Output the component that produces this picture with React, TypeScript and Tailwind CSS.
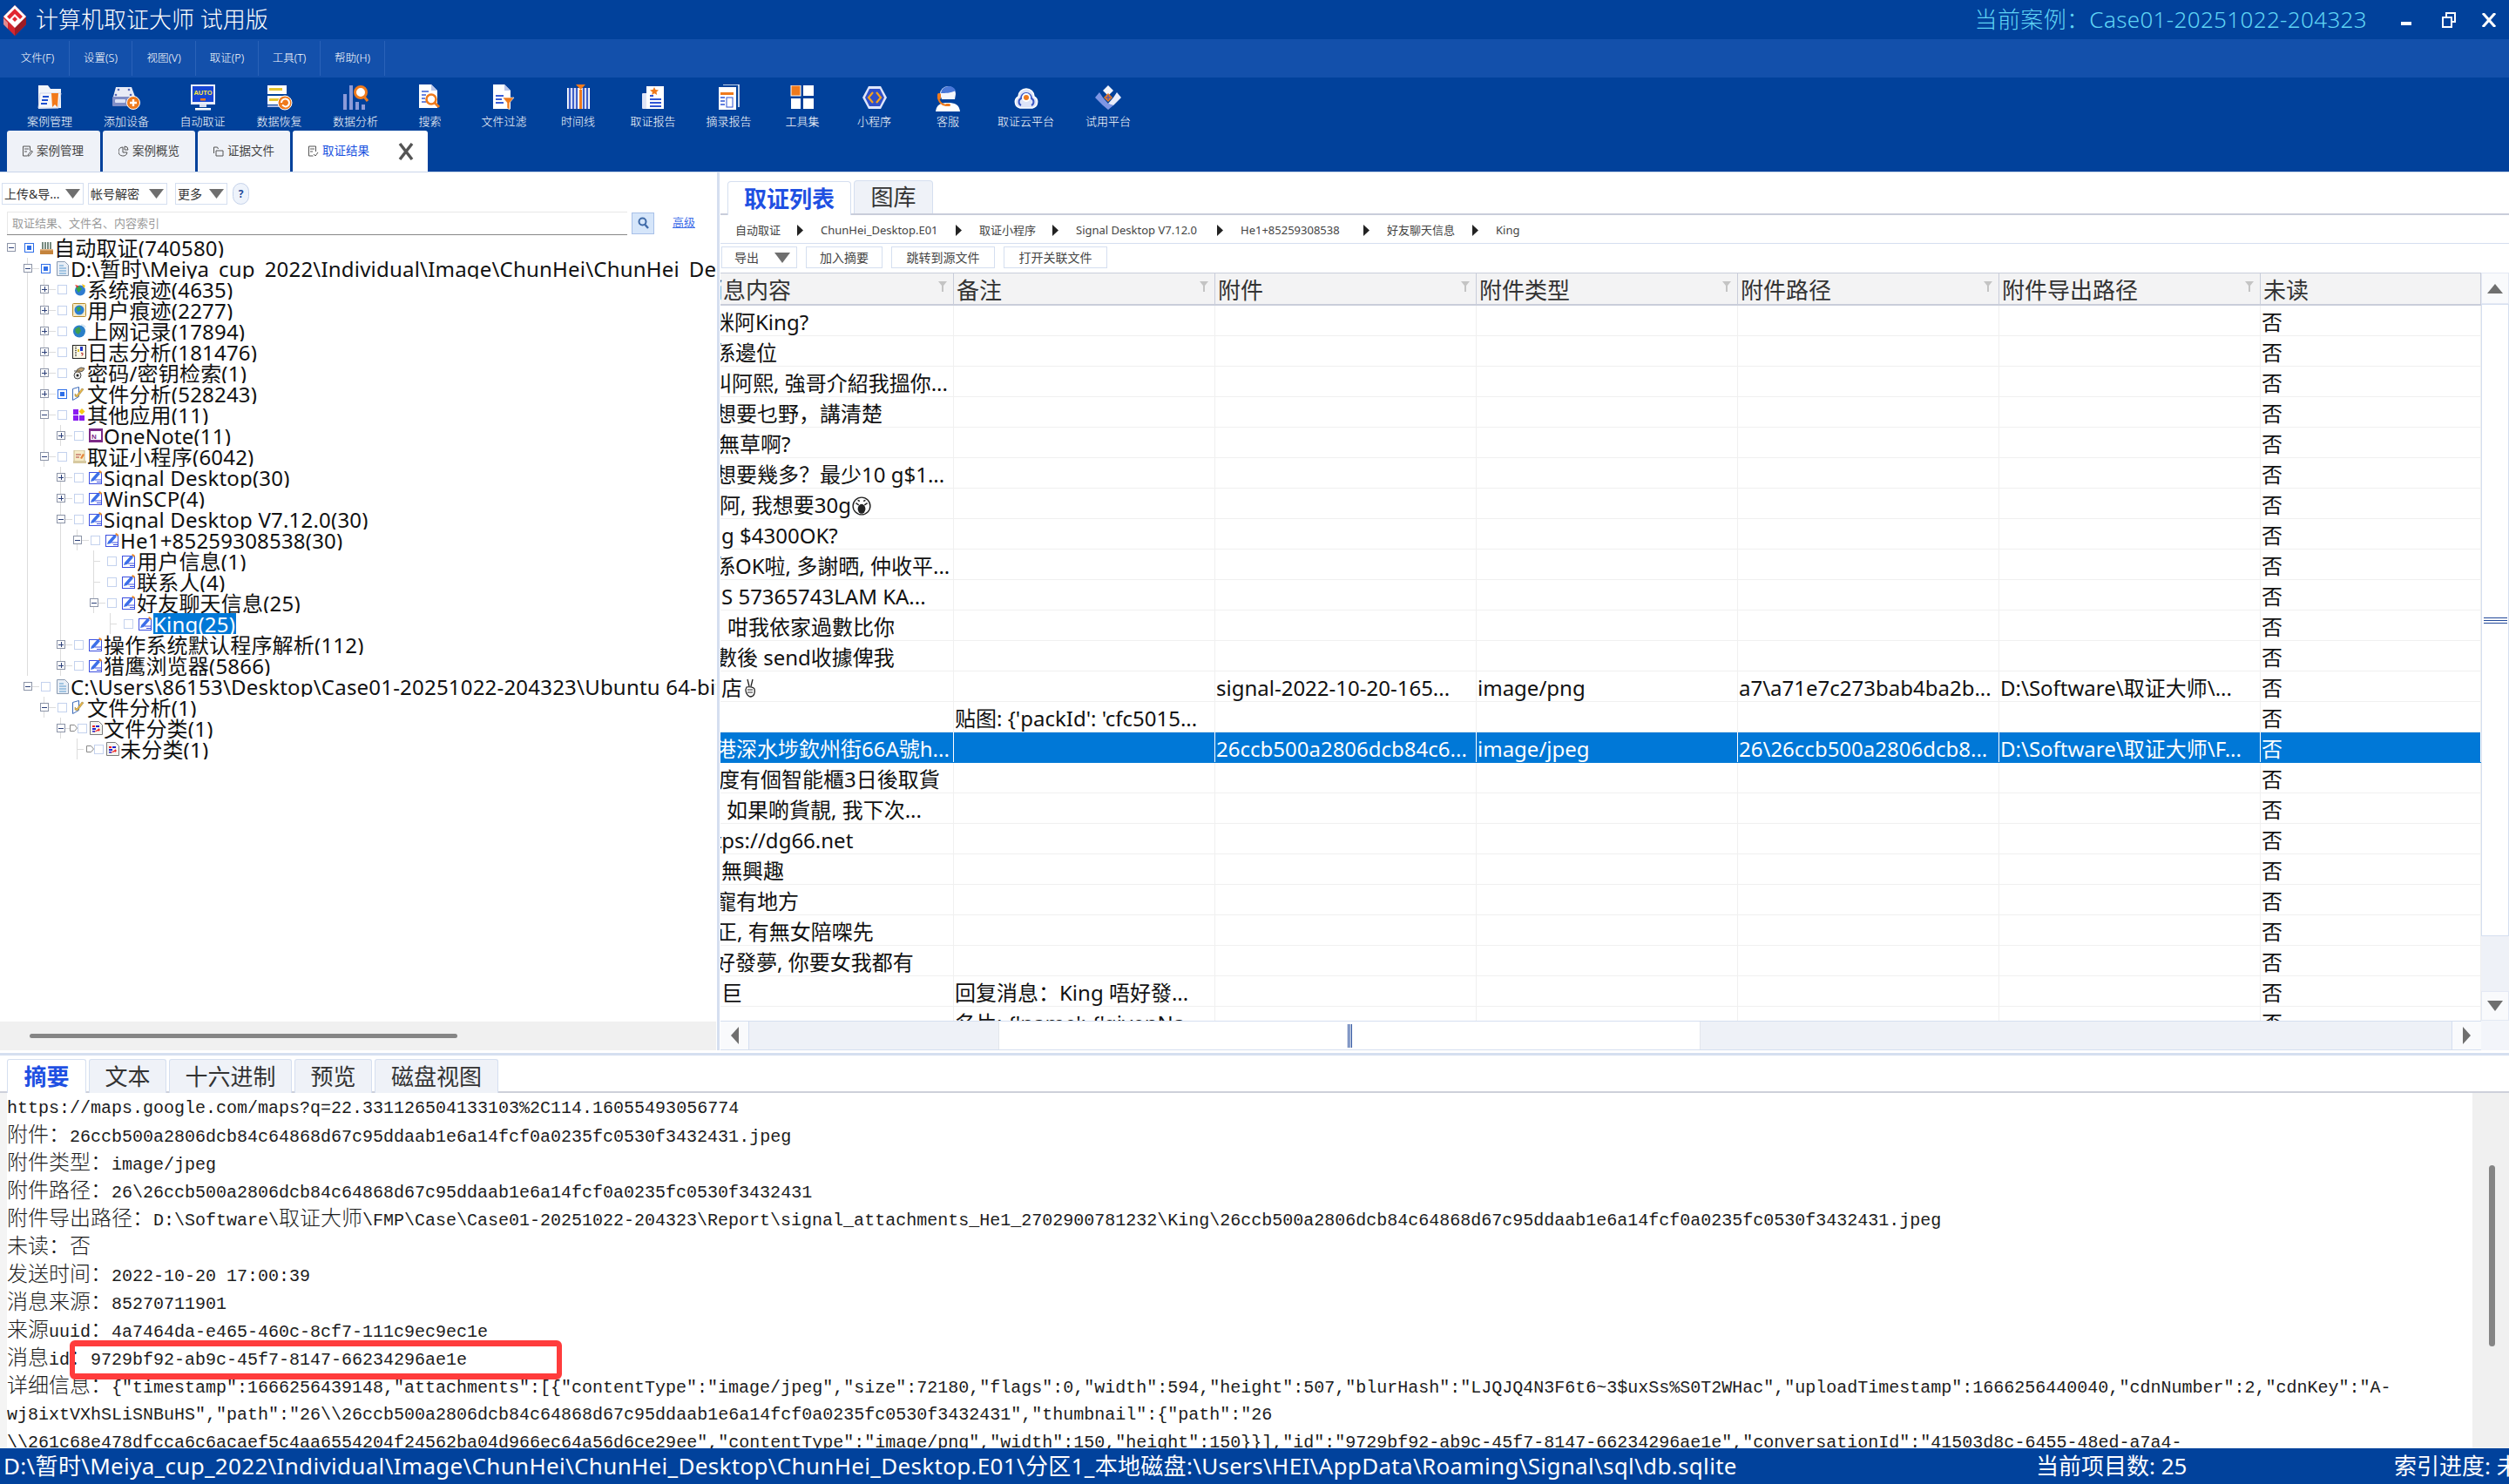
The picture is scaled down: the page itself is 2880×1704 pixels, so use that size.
import React from "react";

const SANS = "font-['Noto_Sans','Noto_Sans_CJK_SC',sans-serif]";

/* ---------- toolbar icons ---------- */
const Logo = () => (
  <svg width="28" height="36" viewBox="0 0 28 36">
    <path d="M14 1L27 14v9L14 36 1 23v-9z" fill="#d5262e" />
    <path d="M14 36V26L27 14v9z" fill="#9c1c25" />
    <path d="M14 1l13 13-13 13L1 14z" fill="#fff" />
    <path d="M14 5l9 9-3 3-6-6-6 6-3-3z" fill="#e1262f" />
    <path d="M14 14l3 3-3 3-3-3z" fill="#e1262f" />
    <path d="M1 16l5 5v7l-5-5z" fill="#f0f0f0" opacity=".5" />
  </svg>
);

const IconCase = () => (
  <svg width="30" height="28" viewBox="0 0 30 28">
    <path d="M2 0h11l3 4h12v22l-26 1z" fill="#fff" opacity=".95" />
    <path d="M4 9h24l-3 17H2z" fill="#f6f7fb" stroke="#cfd6ea" />
    <path d="M7 13h7M6 17h7M5 21h7" stroke="#1e4fd0" strokeWidth="1.8" />
    <path d="M17 9h8l-1 16-3-3-3 3z" fill="#f27a1a" />
  </svg>
);
const IconAdd = () => (
  <svg width="34" height="28" viewBox="0 0 34 28">
    <path d="M5 2h18l4 11H2z" fill="#e8ebf6" />
    <circle cx="8" cy="5" r="1.3" fill="#5466b8" /><circle cx="20" cy="5" r="1.3" fill="#5466b8" />
    <circle cx="5" cy="11" r="1.3" fill="#5466b8" /><circle cx="22" cy="11" r="1.3" fill="#5466b8" />
    <rect x="1" y="13" width="27" height="11" rx="1" fill="#7f8dc6" />
    <rect x="4" y="16" width="12" height="4" rx="1" fill="#dbe1f5" />
    <circle cx="25" cy="20" r="7.5" fill="#ef7a1c" stroke="#fff" />
    <path d="M25 16v8M21 20h8" stroke="#fff" strokeWidth="2.4" />
  </svg>
);
const IconAuto = () => (
  <svg width="28" height="30" viewBox="0 0 28 30">
    <rect x="0" y="0" width="28" height="23" fill="#e9edf8" />
    <rect x="2" y="2" width="24" height="18" fill="#1645d4" />
    <text x="14" y="12" textAnchor="middle" fontSize="7.5" fontWeight="700" fill="#ffe83a" fontFamily="Liberation Sans">AUTO</text>
    <rect x="11" y="16" width="6" height="2.5" fill="#f47a1c" />
    <rect x="10" y="23" width="8" height="3" fill="#d7dcef" />
    <rect x="5" y="27" width="18" height="2.5" fill="#fff" />
  </svg>
);
const IconRecover = () => (
  <svg width="30" height="30" viewBox="0 0 30 30">
    <rect x="1" y="1" width="22" height="10" fill="#fff" /><rect x="3" y="4" width="15" height="3" fill="#e6c52e" />
    <rect x="1" y="13" width="22" height="10" fill="#fff" /><rect x="3" y="16" width="11" height="3" fill="#e6c52e" />
    <rect x="1" y="24" width="15" height="2" fill="#aeb9e2" />
    <circle cx="21" cy="21" r="8" fill="#ef7a1c" stroke="#fff" />
    <path d="M17 21a4.500 4.500 0 1 1 4 4.500M21 25.500l-3-2" fill="none" stroke="#fff" strokeWidth="2" />
  </svg>
);
const IconAnalysis = () => (
  <svg width="30" height="30" viewBox="0 0 30 30">
    <rect x="1" y="11" width="4" height="18" fill="#8b9ad8" />
    <rect x="8" y="1" width="4" height="28" fill="#8b9ad8" />
    <rect x="15" y="20" width="4" height="9" fill="#8b9ad8" />
    <rect x="22" y="23" width="4" height="6" fill="#8b9ad8" />
    <circle cx="21" cy="9" r="6.5" fill="#fff" stroke="#ef7a1c" strokeWidth="3" />
    <path d="M25 14l4 5" stroke="#ef7a1c" strokeWidth="3" />
  </svg>
);
const IconSearchDoc = () => (
  <svg width="28" height="30" viewBox="0 0 28 30">
    <path d="M1 0h14l7 7v20H1z" fill="#fff" /><path d="M15 0l7 7h-7z" fill="#b9c5ea" />
    <path d="M4 8h8M4 12h5M4 16h4M4 20h5" stroke="#3a5ed6" strokeWidth="1.6" />
    <circle cx="15" cy="17" r="5.5" fill="#fff" stroke="#ef7a1c" strokeWidth="2.6" />
    <path d="M19 21l5 5" stroke="#ef7a1c" strokeWidth="3" />
  </svg>
);
const IconFilterDoc = () => (
  <svg width="28" height="30" viewBox="0 0 28 30">
    <path d="M1 0h13l7 7v21H1z" fill="#fff" /><path d="M14 0l7 7h-7z" fill="#b9c5ea" />
    <path d="M4 13h9M4 17h7M4 21h9" stroke="#3a5ed6" strokeWidth="1.8" />
    <path d="M12 15h13l-5 6v8l-3-2v-6z" fill="#ef7a1c" stroke="#fff" strokeWidth=".6" />
  </svg>
);
const IconTime = () => (
  <svg width="28" height="30" viewBox="0 0 28 30">
    <rect x="1" y="4" width="26" height="24" fill="#fff" />
    <path d="M4 4v24M8 4v24M12 4v24M20 4v24M24 4v24" stroke="#3e5fc9" strokeWidth="2.4" />
    <rect x="15" y="6" width="3" height="22" fill="#ef7a1c" />
    <path d="M11 0h11l-5.500 6z" fill="#ef7a1c" />
  </svg>
);
const IconReport = () => (
  <svg width="26" height="30" viewBox="0 0 26 30">
    <rect x="0" y="10" width="6" height="18" rx="1" fill="#dfe4f6" />
    <rect x="5" y="2" width="20" height="26" fill="#fff" />
    <path d="M14 3l1.500 3 3.500.4-2.500 2.300.7 3.300-3-1.700-3 1.700.7-3.300L9 6.400 12.500 6z" fill="#ef7a1c" />
    <path d="M9 13h4M9 17h13M9 21h13M9 25h13" stroke="#2f55d4" strokeWidth="2" />
  </svg>
);
const IconExtract = () => (
  <svg width="26" height="30" viewBox="0 0 26 30">
    <path d="M6 0h18v26" fill="none" stroke="#fff" strokeWidth="1.5" />
    <rect x="1" y="3" width="20" height="26" fill="#fff" />
    <rect x="3" y="9" width="15" height="3" fill="#ef7a1c" />
    <path d="M3 15h5M3 19h5M3 23h5" stroke="#2f55d4" strokeWidth="1.6" />
    <rect x="10" y="15" width="7" height="11" fill="none" stroke="#2f55d4" />
  </svg>
);
const IconTools = () => (
  <svg width="28" height="28" viewBox="0 0 28 28">
    <rect x="1" y="0" width="11" height="12" fill="#ef7a1c" stroke="#fff" />
    <rect x="15" y="0" width="12" height="12" fill="#fff" />
    <rect x="1" y="15" width="11" height="12" fill="#fff" />
    <rect x="15" y="15" width="12" height="12" fill="#fff" />
  </svg>
);
const IconMini = () => (
  <svg width="30" height="30" viewBox="0 0 30 30">
    <path d="M8 2h14l7 13-7 13H8L1 15z" fill="#dfe6fa" />
    <path d="M9 5h12l5 10-5 10H9L4 15z" fill="#2f4fc9" />
    <path d="M13 9l-5 6 5 6M17 9l5 6-5 6" fill="none" stroke="#f6a21c" strokeWidth="2.2" />
  </svg>
);
const IconService = () => (
  <svg width="28" height="32" viewBox="0 0 28 32">
    <path d="M0 32c1-8 6-10 14-10s13 2 14 10z" fill="#fff" />
    <path d="M5 12a9 9 0 0 1 18 0l-1 6H7z" fill="#f6f7fc" />
    <path d="M6 11a9 9 0 0 1 17-3c-6 3-12 3-17 3z" fill="#4a78d8" />
    <path d="M3 14c0 7 3 10 9 11" fill="none" stroke="#ef7a1c" strokeWidth="2" />
    <rect x="2" y="11" width="4" height="7" rx="1.500" fill="#ef7a1c" />
    <rect x="11" y="23" width="6" height="3" rx="1.500" fill="#ef7a1c" />
  </svg>
);
const IconCloud = () => (
  <svg width="32" height="30" viewBox="0 0 32 30">
    <path d="M9 27a7 7 0 0 1-2-13 9 9 0 0 1 18 0 7 7 0 0 1-2 13z" fill="#dde4f8" stroke="#fff" strokeWidth="1.5" />
    <path d="M10 24a4.500 4.500 0 0 1 0-8 6 6 0 0 1 12 0 4.500 4.500 0 0 1 0 8" fill="none" stroke="#3a57c4" strokeWidth="2" />
    <circle cx="16" cy="15" r="5" fill="#fff" /><circle cx="16" cy="15" r="3" fill="#ef7a1c" />
  </svg>
);
const IconTrial = () => (
  <svg width="30" height="30" viewBox="0 0 30 30">
    <path d="M15 1l6 6-6 6-6-6z" fill="#f2f4fb" />
    <path d="M5 9L0 15l9 9 6 5 6-5-6-2-6-7z" fill="#7f96e4" />
    <path d="M25 9l5 6-9 9-6-2 6-7z" fill="#e8ecfa" />
    <path d="M15 10l5 5-5 5-5-5z" fill="#ef7a1c" />
    <path d="M15 12v6M12 15h6" stroke="#2f4fc9" strokeWidth="1" />
  </svg>
);

const tools: { label: string; w: string; icon: React.ReactNode }[] = [
  { label: "案例管理", w: "w-[88px]", icon: <IconCase /> },
  { label: "添加设备", w: "w-[88px]", icon: <IconAdd /> },
  { label: "自动取证", w: "w-[87px]", icon: <IconAuto /> },
  { label: "数据恢复", w: "w-[89px]", icon: <IconRecover /> },
  { label: "数据分析", w: "w-[86px]", icon: <IconAnalysis /> },
  { label: "搜索", w: "w-[85px]", icon: <IconSearchDoc /> },
  { label: "文件过滤", w: "w-[85px]", icon: <IconFilterDoc /> },
  { label: "时间线", w: "w-[85px]", icon: <IconTime /> },
  { label: "取证报告", w: "w-[87px]", icon: <IconReport /> },
  { label: "摘录报告", w: "w-[87px]", icon: <IconExtract /> },
  { label: "工具集", w: "w-[82px]", icon: <IconTools /> },
  { label: "小程序", w: "w-[83px]", icon: <IconMini /> },
  { label: "客服", w: "w-[86px]", icon: <IconService /> },
  { label: "取证云平台", w: "w-[93px]", icon: <IconCloud /> },
  { label: "试用平台", w: "w-[96px]", icon: <IconTrial /> },
];

const menus = [
  { t: "文件(F)", w: "w-[80px] pl-[7px]" },
  { t: "设置(S)", w: "w-[72px]" },
  { t: "视图(V)", w: "w-[73px]" },
  { t: "取证(P)", w: "w-[72px]" },
  { t: "工具(T)", w: "w-[71px]" },
  { t: "帮助(H)", w: "w-[74px]" },
];

/* ---------- tree icons ---------- */
const TPencil = () => (
  <svg width="16" height="16" viewBox="0 0 16 16">
    <rect x=".5" y="2.500" width="14" height="13" fill="#fff" stroke="#3c4fe0" />
    <path d="M7 11h7M9 13.500h5" stroke="#3c4fe0" />
    <path d="M2 13l1-3 7-8 3 2-7 8z" fill="#3c6fe8" />
    <path d="M11 1l1.500-1L15 2l-1 2z" fill="#f0902a" />
  </svg>
);
const TDoc = () => (
  <svg width="14" height="17" viewBox="0 0 14 17">
    <path d="M.5.5h9l4 4v12H.5z" fill="#e8eef6" stroke="#8a9ab0" />
    <path d="M3 5h5M3 8h8M3 11h8M3 14h8" stroke="#5a9acd" />
  </svg>
);
const TDb = () => (
  <svg width="15" height="15" viewBox="0 0 15 15">
    <path d="M3 1v9M6 1v9M9 1v9M12 1v9" stroke="#3d5a4a" strokeWidth="1.400" />
    <rect x="0" y="9" width="15" height="6" fill="#c4833c" />
    <rect x="0" y="9" width="15" height="1.500" fill="#e6b98a" />
  </svg>
);
const TSys = () => (
  <svg width="15" height="15" viewBox="0 0 15 15">
    <circle cx="8" cy="8.500" r="6" fill="#2f7bd0" />
    <path d="M3 6l4-3 3 4-4 4z" fill="#35a54a" /><path d="M2 2l4 1-1 3z" fill="#e23b2e" />
    <path d="M10 1l4 2-2 3z" fill="#f2c21a" />
  </svg>
);
const TGlobeBox = () => (
  <svg width="16" height="16" viewBox="0 0 16 16">
    <rect x=".5" y=".5" width="15" height="15" rx="1" fill="#f4e9c6" stroke="#b58a2c" />
    <circle cx="8" cy="8" r="5.500" fill="#2b7fd2" /><path d="M5 5l4-1 1 4-4 2z" fill="#3aa548" />
  </svg>
);
const TGlobe = () => (
  <svg width="16" height="16" viewBox="0 0 16 16">
    <circle cx="8" cy="8.500" r="7" fill="#2b7fc8" /><path d="M3 6l5-3 2 5-3 4-3-2z" fill="#3f9e4e" />
    <path d="M10 1c3 0 5 2 5 3" stroke="#cfe2ef" fill="none" strokeWidth="1.500" />
  </svg>
);
const TLog = () => (
  <svg width="16" height="16" viewBox="0 0 16 16">
    <rect x=".5" y=".5" width="15" height="15" fill="#fbf8e8" stroke="#222" />
    <path d="M4 2v12" stroke="#222" strokeDasharray="1 1" strokeWidth="1.500" />
    <rect x="9" y="2" width="3" height="5" fill="#2438c8" />
    <rect x="6" y="5" width="2" height="3" fill="#e0c22a" />
    <path d="M10 9.500h2v2h-1v1" fill="none" stroke="#b8262a" />
  </svg>
);
const TKey = () => (
  <svg width="16" height="16" viewBox="0 0 16 16">
    <circle cx="6" cy="11" r="4" fill="#eee" stroke="#444" />
    <path d="M2 6h7M4 8l2-4 4-2 4 1-2 3-3 1" fill="#c9a873" stroke="#555" />
    <circle cx="6" cy="11" r="1.500" fill="#222" />
  </svg>
);
const TFile = () => (
  <svg width="16" height="16" viewBox="0 0 16 16">
    <path d="M.5 2.500l7-2v11l-7 4z" fill="#fff" stroke="#3c6bb8" />
    <path d="M3 8l2 2 6-8 2 1-7 9-3-1z" fill="#e8b64a" stroke="#8a7a3c" strokeWidth=".5" />
  </svg>
);
const TApps = () => (
  <svg width="14" height="14" viewBox="0 0 14 14">
    <rect x="0" y="1" width="6" height="6" fill="#8a1cf0" /><rect x="0" y="8" width="6" height="6" fill="#8a1cf0" />
    <rect x="7" y="8" width="6" height="6" fill="#8a1cf0" /><path d="M10 0l3.500 3.500L10 7 6.500 3.500z" fill="#f6c81a" />
  </svg>
);
const TNote = () => (
  <svg width="16" height="16" viewBox="0 0 16 16">
    <rect width="16" height="16" fill="#7c2a88" />
    <rect x="8" y="3" width="6" height="10" fill="#fff" />
    <rect x="2" y="3" width="8" height="10" fill="#fff" />
    <text x="6" y="11.500" textAnchor="middle" fontSize="8" fontWeight="700" fill="#7c2a88" fontFamily="Liberation Sans">N</text>
  </svg>
);
const TMini = () => (
  <svg width="15" height="15" viewBox="0 0 15 15">
    <rect x="1" y="0" width="12" height="13" fill="#f6ecc8" stroke="#c9b88a" />
    <path d="M3 5h6M3 8h4" stroke="#b14040" /><path d="M8 9l3-5 2 1-3 5z" fill="#e8853a" />
    <rect x="0" y="12" width="15" height="3" fill="#d7c9a0" />
  </svg>
);
const TClass = () => (
  <svg width="15" height="16" viewBox="0 0 15 16">
    <path d="M.5.5h10l4 4v11H.5z" fill="#f4f4f0" stroke="#7b7b7b" />
    <rect x="3" y="5" width="3" height="2" fill="#e22" /><rect x="7" y="5" width="4" height="2" fill="#22c" />
    <rect x="3" y="8" width="4" height="2" fill="#22c" /><path d="M4 13l6-4v-1l2 2-2 2v-1z" fill="#e22" />
    <rect x="3" y="11" width="3" height="1.500" fill="#22c" />
  </svg>
);

type R = {
  l: number;
  t: string;
  exp?: "+" | "-";
  chk?: boolean;
  icon: React.ReactNode;
  sel?: boolean;
  flag?: boolean;
  guides: { x: number; end?: boolean }[];
};
const g = (...xs: number[]) => xs.map((x) => ({ x }));
const pen = <TPencil />;
const rows: R[] = [
  { l: 0, t: "自动取证(740580)", exp: "-", chk: true, icon: <TDb />, guides: [] },
  { l: 1, t: "D:\\暂时\\Meiya_cup_2022\\Individual\\Image\\ChunHei\\ChunHei_Desktop\\ChunHei_Desktop.E01", exp: "-", chk: true, icon: <TDoc />, guides: g(31) },
  { l: 2, t: "系统痕迹(4635)", exp: "+", icon: <TSys />, guides: g(31, 50) },
  { l: 2, t: "用户痕迹(2277)", exp: "+", icon: <TGlobeBox />, guides: g(31, 50) },
  { l: 2, t: "上网记录(17894)", exp: "+", icon: <TGlobe />, guides: g(31, 50) },
  { l: 2, t: "日志分析(181476)", exp: "+", icon: <TLog />, guides: g(31, 50) },
  { l: 2, t: "密码/密钥检索(1)", exp: "+", icon: <TKey />, guides: g(31, 50) },
  { l: 2, t: "文件分析(528243)", exp: "+", chk: true, icon: <TFile />, guides: g(31, 50) },
  { l: 2, t: "其他应用(11)", exp: "-", icon: <TApps />, guides: g(31, 50) },
  { l: 3, t: "OneNote(11)", exp: "+", icon: <TNote />, guides: g(31, 50, 69) },
  { l: 2, t: "取证小程序(6042)", exp: "-", icon: <TMini />, guides: g(31, 50) },
  { l: 3, t: "Signal Desktop(30)", exp: "+", icon: pen, guides: g(31, 69) },
  { l: 3, t: "WinSCP(4)", exp: "+", icon: pen, guides: g(31, 69) },
  { l: 3, t: "Signal Desktop V7.12.0(30)", exp: "-", icon: pen, guides: g(31, 69) },
  { l: 4, t: "He1+85259308538(30)", exp: "-", icon: pen, guides: g(31, 69, 88) },
  { l: 5, t: "用户信息(1)", icon: pen, guides: g(31, 69, 107) },
  { l: 5, t: "联系人(4)", icon: pen, guides: g(31, 69, 107) },
  { l: 5, t: "好友聊天信息(25)", exp: "-", icon: pen, guides: g(31, 69, 107) },
  { l: 6, t: "King(25)", icon: pen, sel: true, guides: g(31, 69, 126) },
  { l: 3, t: "操作系统默认程序解析(112)", exp: "+", icon: pen, guides: g(31, 69) },
  { l: 3, t: "猎鹰浏览器(5866)", exp: "+", icon: pen, guides: g(31, 69) },
  { l: 1, t: "C:\\Users\\86153\\Desktop\\Case01-20251022-204323\\Ubuntu 64-bit-disk1.vmdk", exp: "-", icon: <TDoc />, guides: [] },
  { l: 2, t: "文件分析(1)", exp: "-", icon: <TFile />, guides: g(50) },
  { l: 3, t: "文件分类(1)", exp: "-", icon: <TClass />, flag: true, guides: g(69) },
  { l: 4, t: "未分类(1)", icon: <TClass />, flag: true, guides: g(88) },
];

const Expander = ({ k }: { k?: "+" | "-" }) =>
  k ? (
    <span className="relative z-10 flex h-[10px] w-[10px] shrink-0 items-center justify-center border border-[#8d95a8] bg-white">
      <span className="absolute h-[1px] w-[6px] bg-[#2b3f78]" />
      {k === "+" && <span className="absolute h-[6px] w-[1px] bg-[#2b3f78]" />}
    </span>
  ) : (
    <span className="h-[10px] w-[10px] shrink-0" />
  );

const Check = ({ on }: { on?: boolean }) => (
  <span className={`relative z-10 flex h-[11px] w-[11px] shrink-0 items-center justify-center border bg-white ${on ? "border-[#2f6fe8]" : "border-[#c4d2ee]"}`}>
    {on && <span className="h-[5px] w-[5px] bg-[#2f6fe8]" />}
  </span>
);

const TreeRow = ({ r }: { r: R }) => (
  <div className="relative flex h-[24px] items-center overflow-hidden" style={{ paddingLeft: 8 + 19 * r.l }}>
    {r.guides.map((gd) => (
      <span key={gd.x} className="absolute top-0 h-[24px] w-[1px] bg-[#dcdcdc]" style={{ left: gd.x }} />
    ))}
    {r.l > 0 && <span className="absolute top-[12px] h-[1px] w-[8px] bg-[#dcdcdc]" style={{ left: 12 + 19 * r.l + (r.exp ? 6 : 0) }} />}
    <Expander k={r.exp} />
    {r.flag ? (
      <span className="relative z-10 ml-[5px] flex w-[9px] items-center">
        <svg width="9" height="8" viewBox="0 0 9 8"><path d="M.5.5h5l3 3.500-3 3.500h-5z" fill="#fff" stroke="#888" /></svg>
      </span>
    ) : (
      <span className="w-[10px] shrink-0" />
    )}
    <Check on={r.chk} />
    <span className={`flex shrink-0 items-center justify-center ${r.flag ? "ml-[3px] w-[15px]" : "ml-[6px] w-[16px]"}`}>{r.icon}</span>
    <span className={`ml-[1px] h-[24px] whitespace-nowrap pt-[1px] text-[24px] leading-[24px] tracking-[0.2px] ${r.sel ? "bg-[#0078d7] pr-[1px] text-white" : "text-[#111]"}`}>{r.t}</span>
  </div>
);

/* ---------- table ---------- */
const Scream = () => (
  <svg className="ml-[1px] inline-block align-[-3px]" width="22" height="22" viewBox="0 0 20 20">
    <circle cx="10" cy="10" r="9" fill="#fff" stroke="#222" strokeWidth="1.300" />
    <ellipse cx="10" cy="13" rx="4" ry="5" fill="#222" />
    <path d="M4 7l3 2M16 7l-3 2M6 4l2 1M14 4l-2 1" stroke="#222" strokeWidth="1.400" />
  </svg>
);
const Hand = () => (
  <svg className="ml-[2px] inline-block align-[-2px]" width="14" height="22" viewBox="0 0 14 22">
    <path d="M4 1l2 8M10 1L8 9M3 10c-2 3-1 9 4 11 5 0 6-5 5-9-1-2-6-3-9-2z" fill="#fff" stroke="#222" strokeWidth="1.300" />
    <path d="M4 13h6M4 16h6" stroke="#222" />
  </svg>
);

type Cell = { msg?: React.ReactNode; off?: string; note?: string; att?: string; type?: string; path?: string; exp?: string };
const data: Cell[] = [
  { msg: "咪阿King?", off: "-ml-[9px]" },
  { msg: "係邊位", off: "-ml-[8px]" },
  { msg: "叫阿熙, 強哥介紹我搵你...", off: "-ml-[12px]" },
  { msg: "想要乜野，講清楚", off: "-ml-[7px]" },
  { msg: "無草啊?", off: "-ml-[3px]" },
  { msg: "想要幾多？最少10 g$1...", off: "-ml-[7px]" },
  { msg: <>阿, 我想要30g<Scream /></>, off: "-ml-[2px]" },
  { msg: "g $4300OK?", off: "ml-0" },
  { msg: "係OK啦, 多謝晒, 仲收平...", off: "-ml-[8px]" },
  { msg: "S 57365743LAM KA...", off: "ml-0" },
  { msg: "咁我依家過數比你", off: "ml-[7px]" },
  { msg: "數後 send收據俾我", off: "-ml-[6px]" },
  { msg: <>店<Hand /></>, off: "ml-0", att: "signal-2022-10-20-165...", type: "image/png", path: "a7\\a71e7c273bab4ba2b...", exp: "D:\\Software\\取证大师\\..." },
  { note: "贴图: {'packId': 'cfc5015..." },
  { msg: "港深水埗欽州街66A號h...", off: "-ml-[7px]", att: "26ccb500a2806dcb84c6...", type: "image/jpeg", path: "26\\26ccb500a2806dcb8...", exp: "D:\\Software\\取证大师\\F..." },
  { msg: "度有個智能櫃3日後取貨", off: "-ml-[3px]" },
  { msg: "如果啲貨靚, 我下次...", off: "ml-[6px]" },
  { msg: "ttps://dg66.net", off: "-ml-[17px]" },
  { msg: "無興趣", off: "ml-0" },
  { msg: "寵有地方", off: "-ml-[7px]" },
  { msg: "正, 有無女陪㗎先", off: "-ml-[6px]" },
  { msg: "好發夢, 你要女我都有", off: "-ml-[8px]" },
  { msg: "巨", off: "ml-0", note: "回复消息：King 唔好發..." },
  { note: "名片: {'name': {'givenNa..." },
];

const colW = ["w-[268px]", "w-[300px]", "w-[300px]", "w-[300px]", "w-[300px]", "w-[300px]", "flex-1"];

const HeadCell = ({ t, w, filter = true, off = "" }: { t: string; w: string; filter?: boolean; off?: string }) => (
  <div className={`relative h-full overflow-hidden border-r border-[#c9cdda] pl-[3px] pt-[2px] text-[26px] leading-[34px] text-[#333] ${w}`}>
    <span className={`block whitespace-nowrap ${off}`}>{t}</span>
    {filter && (
      <svg className="absolute right-[7px] top-[9px]" width="10" height="12" viewBox="0 0 10 12">
        <path d="M0 0h10L6 5v7H4V5z" fill="#c4c4c4" />
      </svg>
    )}
  </div>
);

const BodyCell = ({ w, sel, children, cls = "" }: { w: string; sel?: boolean; children?: React.ReactNode; cls?: string }) => (
  <div className={`h-full overflow-hidden border-r pl-[1px] ${sel ? "border-white" : "border-[#f0f0f0]"} ${w}`}>
    <div className={`whitespace-nowrap text-[24px] leading-[37px] ${cls}`}>{children}</div>
  </div>
);

const Tri = ({ dir, c = "#6f6f6f", w = 14, h = 9 }: { dir: "u" | "d" | "l" | "r"; c?: string; w?: number; h?: number }) => {
  const p = { u: "M0 10L7 0l7 10z", d: "M0 0h14L7 10z", l: "M14 0v10L0 5z", r: "M0 0v10l14-5z" }[dir];
  return (
    <svg width={w} height={h} viewBox="0 0 14 10" preserveAspectRatio="none">
      <path d={p} fill={c} />
    </svg>
  );
};

/* ---------- summary text: half-width mono + full-width CJK ---------- */
const Mixed = ({ s }: { s: string }) => {
  const parts = s.split(/([\u3000-\u9fff\uff00-\uffef]+)/);
  return (
    <>
      {parts.map((p, i) =>
        i % 2 ? (
          <span key={i} className="font-['Noto_Sans_CJK_SC',sans-serif] text-[24px] font-light leading-[1]">{p}</span>
        ) : (
          <span key={i}>{p}</span>
        )
      )}
    </>
  );
};

const lines = [
  "https://maps.google.com/maps?q=22.331126504133103%2C114.16055493056774",
  "附件：26ccb500a2806dcb84c64868d67c95ddaab1e6a14fcf0a0235fc0530f3432431.jpeg",
  "附件类型：image/jpeg",
  "附件路径：26\\26ccb500a2806dcb84c64868d67c95ddaab1e6a14fcf0a0235fc0530f3432431",
  "附件导出路径：D:\\Software\\取证大师\\FMP\\Case\\Case01-20251022-204323\\Report\\signal_attachments_He1_2702900781232\\King\\26ccb500a2806dcb84c64868d67c95ddaab1e6a14fcf0a0235fc0530f3432431.jpeg",
  "未读：否",
  "发送时间：2022-10-20 17:00:39",
  "消息来源：85270711901",
  "来源uuid：4a7464da-e465-460c-8cf7-111c9ec9ec1e",
  "消息id：9729bf92-ab9c-45f7-8147-66234296ae1e",
  "详细信息：{\"timestamp\":1666256439148,\"attachments\":[{\"contentType\":\"image/jpeg\",\"size\":72180,\"flags\":0,\"width\":594,\"height\":507,\"blurHash\":\"LJQJQ4N3F6t6~3$uxSs%S0T2WHac\",\"uploadTimestamp\":1666256440040,\"cdnNumber\":2,\"cdnKey\":\"A-",
  "wj8ixtVXhSLiSNBuHS\",\"path\":\"26\\\\26ccb500a2806dcb84c64868d67c95ddaab1e6a14fcf0a0235fc0530f3432431\",\"thumbnail\":{\"path\":\"26",
  "\\\\261c68e478dfcca6c6acaef5c4aa6554204f24562ba04d966ec64a56d6ce29ee\",\"contentType\":\"image/png\",\"width\":150,\"height\":150}}],\"id\":\"9729bf92-ab9c-45f7-8147-66234296ae1e\",\"conversationId\":\"41503d8c-6455-48ed-a7a4-",
];

const crumbs = [
  { t: "自动取证", w: "w-[98px]" },
  { t: "ChunHei_Desktop.E01", w: "w-[182px]" },
  { t: "取证小程序", w: "w-[111px]" },
  { t: "Signal Desktop V7.12.0", w: "w-[189px]" },
  { t: "He1+85259308538", w: "w-[168px]" },
  { t: "好友聊天信息", w: "w-[125px]" },
  { t: "King", w: "w-[40px]" },
];

const TopTab = ({ label, icon, active, w }: { label: string; icon: React.ReactNode; active?: boolean; w: string }) => (
  <div className={`flex h-[47px] items-center rounded-t-[3px] pl-[18px] text-[13.5px] ${w} ${active ? "bg-white text-[#1a52e0]" : "bg-[#eff2f8] text-[#444]"}`}>
    <span className="mr-[2px] flex h-[14px] w-[14px] items-center">{icon}</span>
    {label}
    {active && (
      <svg className="ml-[33px]" width="18" height="20" viewBox="0 0 18 20">
        <path d="M2 1l14 18M16 1L2 19" stroke="#555" strokeWidth="3.400" />
      </svg>
    )}
  </div>
);

export default function App() {
  return (
    <div className={`flex h-[1704px] w-[2880px] flex-col overflow-hidden bg-white ${SANS}`}>
      {/* title bar */}
      <div className="flex h-[45px] shrink-0 items-center bg-[#01419b] text-white">
        <div className="ml-[3px] flex w-[38px] items-center"><Logo /></div>
        <div className="text-[26px] font-light leading-[45px]">计算机取证大师 试用版</div>
        <div className="ml-auto mr-[39px] text-[26px] font-light leading-[45px] tracking-[0.35px] text-[#5fd4f5]">当前案例：Case01-20251022-204323</div>
        <svg className="mr-[35px]" width="12" height="12" viewBox="0 0 12 12"><rect y="8" width="12" height="4" fill="#fff" /></svg>
        <svg className="mr-[30px]" width="16" height="18" viewBox="0 0 16 18"><path d="M5 5V1h10v10h-4M1 6h10v11H1z" fill="none" stroke="#fff" strokeWidth="2" /></svg>
        <svg className="mr-[15px]" width="16" height="16" viewBox="0 0 16 16"><path d="M1 0l14 16M15 0L1 16" stroke="#fff" strokeWidth="3" /></svg>
      </div>
      {/* menu */}
      <div className="flex h-[44px] shrink-0 items-center bg-[#1350ab] text-[12.5px] font-light text-white">
        {menus.map((m) => (
          <div key={m.t} className={`flex h-[40px] items-center justify-center border-r border-[#2a62b8] ${m.w}`}>{m.t}</div>
        ))}
      </div>
      {/* toolbar + tabs */}
      <div className="flex h-[109px] shrink-0 flex-col bg-[#01419b]">
        <div className="flex h-[61px] pl-[13px] pt-[8px] text-white">
          {tools.map((t) => (
            <div key={t.label} className={`flex flex-col items-center ${t.w}`}>
              <div className="flex h-[30px] items-center">{t.icon}</div>
              <div className="mt-[3px] whitespace-nowrap text-[13px] font-light leading-[18px]">{t.label}</div>
            </div>
          ))}
        </div>
        <div className="flex h-[47px] gap-[3px] pl-[8px]">
          <TopTab w="w-[107px]" label="案例管理" icon={<svg width="12" height="13" viewBox="0 0 12 13"><path d="M.5 1h8v5M.5 1v11h5M2 4h5M2 7h3M6 11l4-5 1.500 1-4 5H6z" fill="none" stroke="#555" /></svg>} />
          <TopTab w="w-[106px]" label="案例概览" icon={<svg width="12" height="13" viewBox="0 0 12 13"><path d="M5 2a5 5 0 1 0 5 6H5zM7 1v4h4a4 4 0 0 0-4-4z" fill="none" stroke="#555" /></svg>} />
          <TopTab w="w-[106px]" label="证据文件" icon={<svg width="12" height="13" viewBox="0 0 12 13"><path d="M.5 9V2h4l1 2M3 6h8v6H3z" fill="none" stroke="#555" /></svg>} />
          <TopTab w="w-[155px]" active label="取证结果" icon={<svg width="12" height="13" viewBox="0 0 12 13"><path d="M.5 1h8v6M.5 1v11h5M2 4h5M2 7h3M6 10l2 2 3-4" fill="none" stroke="#555" /></svg>} />
        </div>
        <div className="h-[1px] bg-[#c9d5ea]" />
      </div>

      {/* upper workspace */}
      <div className="flex h-[1011px] shrink-0">
        {/* left */}
        <div className="flex w-[822px] shrink-0 flex-col">
          <div className="flex h-[45px] items-start gap-[5px] pl-[2px] pt-[12px] text-[14px] text-[#333]">
            {[
              { t: "上传&导...", w: "w-[94px]" },
              { t: "帐号解密", w: "w-[91px]" },
            ].map((b) => (
              <div key={b.t} className={`flex h-[25px] items-center justify-between border border-[#d5dff0] pl-[2px] pr-[3px] ${b.w}`}>
                <span className="whitespace-nowrap">{b.t}</span>
                <Tri dir="d" w={17} h={11} />
              </div>
            ))}
            <div className="ml-[4px] flex h-[25px] w-[60px] items-center justify-between border border-[#d5dff0] pl-[2px] pr-[3px]">
              <span>更多</span>
              <Tri dir="d" w={17} h={11} />
            </div>
            <div className="ml-[1px] flex h-[25px] w-[19px] items-center justify-center rounded-full border border-[#c5d2ea] bg-[#eef3fb] text-[12px] font-bold text-[#234a9a]">?</div>
          </div>
          <div className="flex h-[26px] items-center pl-[8px]">
            <div className="flex h-[26px] w-[712px] items-center border-l border-t border-[#e8e8e8] pl-[5px] text-[13px] text-[#9a9a9a] shadow-[0_1px_0_#888]">取证结果、文件名、内容索引</div>
            <div className="ml-[5px] flex h-[25px] w-[26px] items-center justify-center border border-[#a8c0e8] bg-[#d6e6fa]">
              <svg width="13" height="14" viewBox="0 0 13 14"><circle cx="5.500" cy="5.500" r="4" fill="none" stroke="#3f6aa8" strokeWidth="2" /><path d="M8.500 9l3.500 4" stroke="#3f6aa8" strokeWidth="2.400" /></svg>
            </div>
            <span className="ml-[21px] text-[13px] text-[#3f6ee8] underline">高级</span>
          </div>
          <div className="mt-[3px] min-h-0 flex-1">
            {rows.map((r) => <TreeRow key={r.t} r={r} />)}
          </div>
          <div className="mb-[3px] flex h-[33px] shrink-0 items-center bg-[#f0f0f0] pl-[34px]">
            <div className="h-[5px] w-[491px] rounded-full bg-[#858585]" />
          </div>
        </div>
        {/* splitter */}
        <div className="mx-[1px] h-[1008px] w-[3px] bg-[#d5dff0]" />
        {/* right */}
        <div className="flex min-w-0 flex-1 flex-col pt-[10px]">
          <div className="flex h-[39px] shrink-0 items-end gap-[3px] border-b-2 border-[#c9cdda] pl-[8px]">
            <div className="relative top-[2px] flex h-[39px] w-[142px] items-center justify-center rounded-t-[4px] border border-b-0 border-[#d5dff0] bg-white text-[26px] font-bold text-[#1f50e2]">取证列表</div>
            <div className="flex h-[38px] w-[91px] items-center justify-center rounded-t-[4px] border border-b-0 border-[#d5dff0] bg-[#eff2f8] text-[26px] text-[#333]">图库</div>
          </div>
          <div className="flex h-[33px] shrink-0 items-center border-b border-[#d5dff0] pl-[17px] pt-[3px] text-[13px] text-[#444]">
            {crumbs.map((c, i) => (
              <div key={c.t} className={`flex items-center ${c.w}`}>
                <span className="whitespace-nowrap">{c.t}</span>
                {i < 6 && <span className="ml-auto mr-[20px] flex"><Tri dir="r" c="#222" w={7} h={13} /></span>}
              </div>
            ))}
          </div>
          <div className="flex h-[33px] shrink-0 items-start gap-[10px] pl-[1px] pt-[3px] text-[14px] text-[#444]">
            <div className="flex h-[25px] w-[87px] items-center border border-[#d5dff0] pl-[14px] pr-[7px]"><span>导出</span><span className="ml-auto flex"><Tri dir="d" w={18} h={12} /></span></div>
            <div className="flex h-[25px] w-[88px] items-center justify-center border border-[#d5dff0]">加入摘要</div>
            <div className="flex h-[25px] w-[119px] items-center justify-center border border-[#d5dff0]">跳转到源文件</div>
            <div className="flex h-[25px] w-[119px] items-center justify-center border border-[#d5dff0]">打开关联文件</div>
          </div>
          {/* grid + scroll */}
          <div className="flex h-[893px] shrink-0 flex-col">
            <div className="flex h-[859px] shrink-0">
              <div className="flex w-[2021px] shrink-0 flex-col overflow-hidden">
                <div className="flex h-[38px] shrink-0 border-b-2 border-t border-[#c9cdda] bg-[#f3f3f4]">
                  <HeadCell t="消息内容" w={colW[0]} off="-ml-[26px]" />
                  <HeadCell t="备注" w={colW[1]} />
                  <HeadCell t="附件" w={colW[2]} />
                  <HeadCell t="附件类型" w={colW[3]} />
                  <HeadCell t="附件路径" w={colW[4]} />
                  <HeadCell t="附件导出路径" w={colW[5]} />
                  <HeadCell t="未读" w={colW[6]} filter={false} />
                </div>
                {data.map((d, i) => {
                  const sel = i === 14;
                  return (
                    <div key={i} className={`flex h-[35px] shrink-0 border-b ${sel ? "border-[#0078d7] bg-[#0078d7] text-white" : "border-[#f0f0f0] text-[#111]"}`}>
                      <BodyCell w={colW[0]} sel={sel} cls={d.off}>{d.msg}</BodyCell>
                      <BodyCell w={colW[1]} sel={sel}>{d.note}</BodyCell>
                      <BodyCell w={colW[2]} sel={sel}>{d.att}</BodyCell>
                      <BodyCell w={colW[3]} sel={sel}>{d.type}</BodyCell>
                      <BodyCell w={colW[4]} sel={sel}>{d.path}</BodyCell>
                      <BodyCell w={colW[5]} sel={sel}>{d.exp}</BodyCell>
                      <BodyCell w={colW[6]} sel={sel}>否</BodyCell>
                    </div>
                  );
                })}
              </div>
              {/* vertical scrollbar */}
              <div className="flex flex-1 flex-col bg-[#eef1f7]">
                <div className="flex h-[36px] shrink-0 items-center justify-center border border-[#e4e9f4] bg-[#f9fafc]"><Tri dir="u" w={18} h={11} /></div>
                <div className="flex h-[726px] shrink-0 items-center justify-center border border-[#d5dff0] bg-white">
                  <div className="flex w-[27px] flex-col gap-[2px]">
                    <span className="h-[1px] bg-[#234a9a]" /><span className="h-[1px] bg-[#234a9a]" /><span className="h-[1px] bg-[#234a9a]" />
                  </div>
                </div>
                <div className="flex-1" />
                <div className="flex h-[34px] shrink-0 items-center justify-center border border-[#e4e9f4] bg-[#f9fafc]"><Tri dir="d" w={18} h={12} /></div>
              </div>
            </div>
            {/* horizontal scrollbar */}
            <div className="flex h-[34px] shrink-0">
              <div className="flex w-[2021px] border-y border-[#d5dff0] bg-[#eef1f7]">
                <div className="flex w-[33px] items-center justify-center border-r border-[#d5dff0] bg-[#f9fafc]"><Tri dir="l" w={9} h={20} /></div>
                <div className="w-[286px]" />
                <div className="flex w-[806px] items-center justify-center border-x border-[#e3e6ec] bg-white">
                  <div className="flex h-[27px] gap-[1px]"><span className="w-[1px] bg-[#234a9a]" /><span className="w-[1px] bg-[#234a9a]" /><span className="w-[1px] bg-[#234a9a]" /></div>
                </div>
                <div className="flex-1" />
                <div className="flex w-[34px] items-center justify-center border-l border-[#d5dff0] bg-[#f9fafc]"><Tri dir="r" w={9} h={20} /></div>
              </div>
              <div className="flex-1 bg-[#f3f5fa]" />
            </div>
          </div>
        </div>
      </div>

      {/* lower section */}
      <div className="h-[3px] shrink-0 bg-[#d5dff0]" />
      <div className="flex h-[43px] shrink-0 items-end gap-[3px] border-b-2 border-[#cdd0da] pl-[8px] text-[26px]">
        {[
          { t: "摘要", w: "w-[91px]", a: true },
          { t: "文本", w: "w-[89px]" },
          { t: "十六进制", w: "w-[141px]" },
          { t: "预览", w: "w-[89px]" },
          { t: "磁盘视图", w: "w-[142px]" },
        ].map((t) => (
          <div key={t.t} className={`relative top-[2px] flex h-[39px] items-center justify-center rounded-t-[3px] border border-b-0 border-[#d5dff0] ${t.w} ${t.a ? "bg-white font-bold text-[#1f50e2]" : "bg-[#eff2f8] text-[#333]"}`}>{t.t}</div>
        ))}
      </div>
      <div className="relative flex min-h-0 flex-1">
        <div className="w-[8px] shrink-0 bg-[#f4f4f4]" />
        <div className="min-w-0 flex-1 overflow-hidden pt-[2px] font-['Liberation_Mono',monospace] text-[20px] leading-[32px] text-[#1c1c1c]">
          {lines.map((l, i) => (
            <div key={i} className="h-[32px] whitespace-pre"><Mixed s={l} /></div>
          ))}
        </div>
        <div className="flex w-[42px] shrink-0 justify-center bg-[#f0f0f0] pl-[2px]">
          <div className="mt-[83px] h-[208px] w-[7px] rounded-full bg-[#858585]" />
        </div>
        {/* annotation */}
        <div className="absolute left-[80px] top-[284px] h-[45px] w-[565px] rounded-[6px] border-x-[6px] border-y-[7px] border-[#ff3c3c]" />
      </div>
      {/* status */}
      <div className="flex h-[41px] shrink-0 items-center bg-[#01429c] pl-[4px] text-[26px] whitespace-nowrap text-white">
        <div className="w-[2333px] shrink-0 tracking-[0.32px]">D:\暂时\Meiya_cup_2022\Individual\Image\ChunHei\ChunHei_Desktop\ChunHei_Desktop.E01\分区1_本地磁盘:\Users\HEI\AppData\Roaming\Signal\sql\db.sqlite</div>
        <div className="w-[411px] shrink-0">当前项目数: 25</div>
        <div>索引进度: 未开始</div>
      </div>
    </div>
  );
}
